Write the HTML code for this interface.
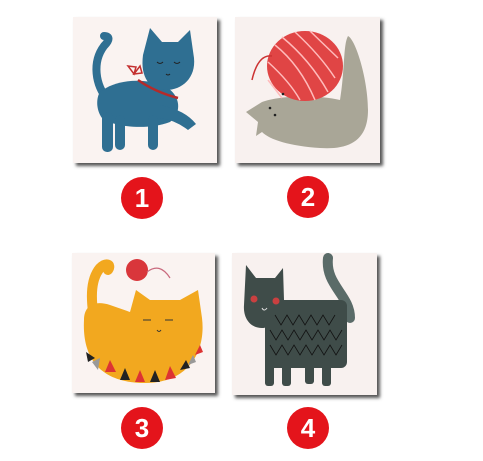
<!DOCTYPE html>
<html><head><style>
html,body{margin:0;padding:0;background:#fff;width:483px;height:461px;overflow:hidden}
</style></head><body>
<svg width="483" height="461" viewBox="0 0 483 461" xmlns="http://www.w3.org/2000/svg">
<defs>
<filter id="sh" x="-10%" y="-10%" width="130%" height="130%"><feGaussianBlur stdDeviation="1.5"/></filter>
</defs>
<rect width="483" height="461" fill="#fff"/>
<g fill="#555" filter="url(#sh)">
<rect x="76" y="20" width="144" height="146"/>
<rect x="238" y="20" width="145" height="146"/>
<rect x="75" y="256" width="143" height="140"/>
<rect x="235" y="256" width="145" height="142"/>
</g>
<rect x="73" y="17" width="144" height="146" fill="#faf3f1"/>
<rect x="235" y="17" width="145" height="146" fill="#f8f1ef"/>
<rect x="72" y="253" width="143" height="140" fill="#faf3f1"/>
<rect x="232" y="253" width="145" height="142" fill="#f8f1ef"/>

<!-- cat 1 blue -->
<path d="M108 100 C95 85 92 62 104 46 C110 40 110 36 104 36" stroke="#2f6f92" stroke-width="8" fill="none" stroke-linecap="round"/>
<g fill="#2f6f92">
<path d="M100 92 C115 80 140 78 160 84 C178 90 185 110 170 122 C150 130 115 128 102 118 C96 110 96 98 100 92Z"/>
<path d="M143 55 L150 28 L162 42 L178 42 L190 30 L194 58 C196 78 182 90 166 90 C150 90 140 78 143 55Z"/>
<rect x="102" y="112" width="11" height="40" rx="5"/>
<rect x="115" y="115" width="10" height="35" rx="5"/>
<rect x="148" y="115" width="10" height="35" rx="5"/>
<path d="M160 105 Q185 110 196 124 L188 130 Q175 120 160 118Z"/>
</g>
<path d="M138 80 Q155 92 178 98" stroke="#b52a2a" stroke-width="2.5" fill="none"/>
<path d="M134 74 l-6 -8 l8 1 z M134 74 l6 -8 l2 7z" stroke="#c43030" stroke-width="1.5" fill="none"/>
<g stroke="#222" stroke-width="1" fill="none"><path d="M157 62 q3 3 6 0 M174 62 q3 3 6 0 M166 74 q2 2 4 0"/></g>

<!-- cat 2 grey + yarn -->
<path d="M246 112 L262 102 C280 95 320 95 340 100 C345 70 343 45 348 36 C356 40 368 80 368 110 C368 140 350 150 320 148 C290 146 270 140 262 132 L256 136 L258 122Z" fill="#a9a697"/>
<ellipse cx="305" cy="66" rx="38" ry="35" fill="#e04545"/>
<g stroke="#fbb" stroke-width="1.5" fill="none">
<path d="M275 45 Q300 65 315 100 M282 37 Q310 60 328 92 M295 32 Q320 55 335 78 M268 62 Q290 82 300 100 M310 31 L338 58 M268 80 L282 98"/>
</g>
<path d="M272 56 Q258 54 252 80" stroke="#c33" stroke-width="1.5" fill="none"/>
<g fill="#222"><circle cx="270" cy="108" r="1.3"/><circle cx="275" cy="115" r="1.3"/><circle cx="283" cy="94" r="1.3"/></g>

<!-- cat 3 orange -->
<path d="M96 330 C90 300 90 280 100 268 C106 262 112 264 108 270" stroke="#f2a81f" stroke-width="10" fill="none" stroke-linecap="round"/>
<path d="M84 320 C84 305 95 300 110 305 L130 312 L136 290 L150 300 L180 300 L198 290 L202 318 C206 350 190 383 145 383 C100 383 82 358 84 320Z" fill="#f2a81f"/>
<circle cx="137" cy="270" r="11" fill="#d9363b"/>
<path d="M147 272 Q160 262 170 278" stroke="#c96a7e" stroke-width="1.2" fill="none"/>
<g fill="#222"><polygon points="86,352 95,358 88,362"/><polygon points="120,380 125,368 130,380"/><polygon points="150,382 155,370 160,382"/><polygon points="180,370 186,360 190,368"/></g>
<g fill="#d33"><polygon points="105,372 110,360 116,372"/><polygon points="135,382 140,370 145,382"/><polygon points="165,380 170,366 176,378"/><polygon points="195,355 200,345 203,352"/></g>
<g fill="#999"><polygon points="92,362 100,358 98,370"/><polygon points="188,365 193,355 196,362"/></g>
<g stroke="#333" stroke-width="1" fill="none"><path d="M143 320 h8 M165 320 h8 M157 330 q2 3 4 0"/></g>

<!-- cat 4 dark -->
<path d="M350 318 C350 295 325 285 328 258" stroke="#5a6b68" stroke-width="10" fill="none" stroke-linecap="round"/>
<g fill="#3f4c49">
<path d="M244 305 L246 265 L256 278 L275 278 L283 268 L284 300 C285 318 270 328 262 328 C250 328 243 318 244 305Z"/>
<rect x="265" y="300" width="82" height="68" rx="6"/>
<rect x="265" y="360" width="9" height="26" rx="3"/>
<rect x="282" y="360" width="9" height="26" rx="3"/>
<rect x="305" y="360" width="9" height="24" rx="3"/>
<rect x="322" y="360" width="9" height="26" rx="3"/>
</g>
<g stroke="#111" stroke-width="0.8" fill="none">
<path d="M275 315 l6 10 l6 -10 l6 10 l6 -10 l6 10 l6 -10 l6 10 l6 -10 l6 10 l6 -10 M270 330 l6 10 l6 -10 l6 10 l6 -10 l6 10 l6 -10 l6 10 l6 -10 l6 10 l6 -10 l6 10 l6 -10 M270 345 l6 10 l6 -10 l6 10 l6 -10 l6 10 l6 -10 l6 10 l6 -10 l6 10 l6 -10 l6 10 l6 -10"/>
</g>
<g fill="#c94040"><circle cx="254" cy="299" r="3.5"/><circle cx="276" cy="301" r="3.5"/></g>
<path d="M262 308 q2 4 5 0" stroke="#ddd" stroke-width="1" fill="none"/>

<g fill="#e4141b">
<circle cx="142" cy="198" r="21"/><circle cx="308" cy="197" r="21"/>
<circle cx="142" cy="428" r="21"/><circle cx="308" cy="428" r="21"/>
</g>
<g fill="#fff" font-family="Liberation Sans, sans-serif" font-weight="bold" font-size="26" text-anchor="middle">
<text x="142" y="207">1</text><text x="308" y="206">2</text>
<text x="142" y="437">3</text><text x="308" y="437">4</text>
</g>
</svg>
</body></html>
